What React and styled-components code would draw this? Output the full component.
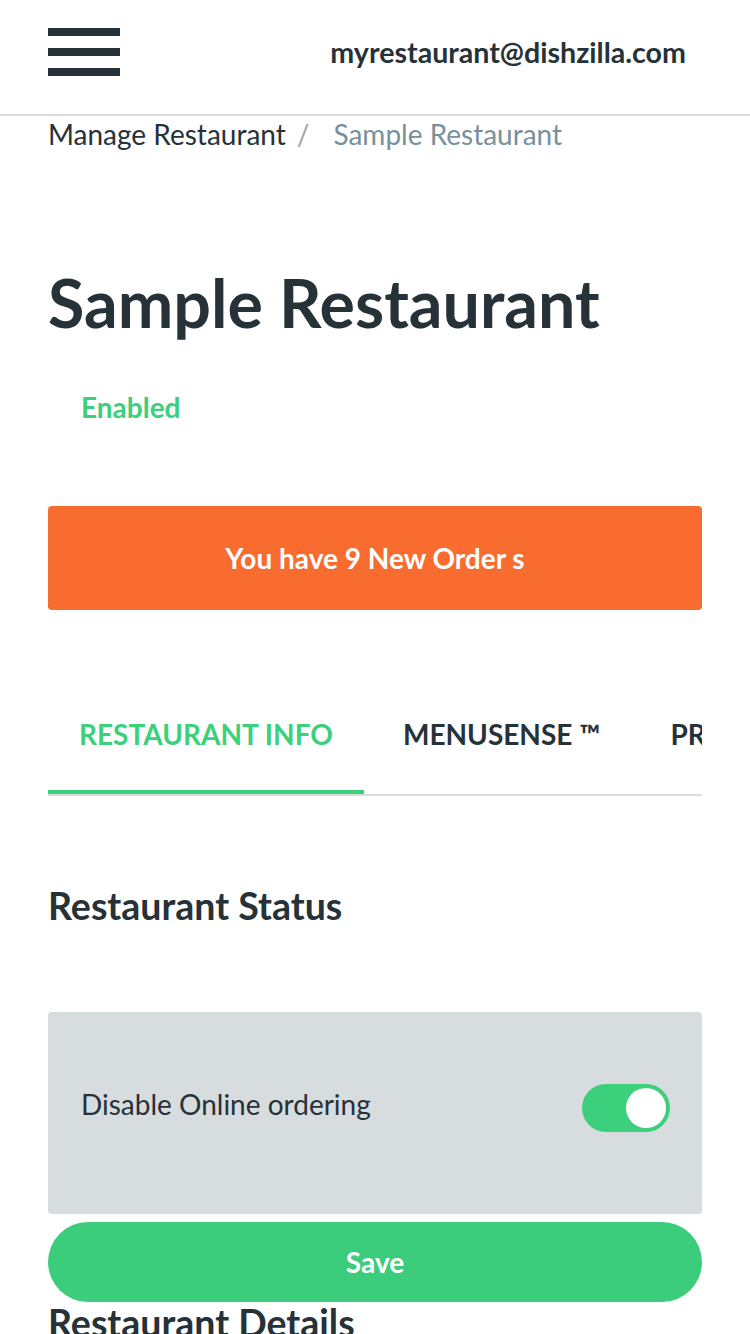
import React from "react";
import styled, { createGlobalStyle } from "styled-components";

const Global = createGlobalStyle`
  html, body { margin: 0; padding: 0; background: #fff; }
  body { font-family: Lato, "Open Sans", sans-serif; color: #263238; overflow: hidden; }
  * { box-sizing: border-box; }
`;

const Page = styled.div`
  width: 750px;
  height: 1334px;
  overflow: hidden;
`;

const Header = styled.header`
  height: 116px;
  border-bottom: 2px solid #dcdcdc;
  display: flex;
  align-items: flex-start;
  justify-content: space-between;
  padding: 0 64px 0 48px;
`;

const Burger = styled.button`
  margin-top: 28px;
  width: 72px;
  height: 48px;
  border: 0;
  padding: 0;
  background: transparent;
  display: flex;
  flex-direction: column;
  justify-content: space-between;
  span {
    display: block;
    height: 8px;
    background: #263238;
  }
`;

const Email = styled.div`
  margin-top: 35px;
  font-size: 28.6px;
  line-height: 34px;
  font-weight: 700;
  color: #263238;
`;

const Content = styled.main`
  padding: 0 48px;
`;

const Crumbs = styled.nav`
  display: flex;
  align-items: center;
  height: 36px;
  font-size: 28px;
  line-height: 36px;
`;

const Crumb = styled.span`
  color: ${(p) => (p.$current ? "#78909c" : "#263238")};
`;

const Sep = styled.span`
  color: #9aa5ab;
  padding: 0 24px 0 11px;
`;

const Title = styled.h1`
  margin: 110px 0 0;
  font-size: 66.4px;
  line-height: 80px;
  font-weight: 700;
  color: #263238;
`;

const Status = styled.div`
  margin-top: 48px;
  padding-left: 33px;
  font-size: 28px;
  font-weight: 700;
  color: #3ccf7c;
  line-height: 34px;
`;

const OrdersBanner = styled.button`
  display: block;
  width: 100%;
  height: 104px;
  margin-top: 82px;
  border: 0;
  border-radius: 4px;
  background: #f86d2f;
  color: #fff;
  font-family: inherit;
  font-size: 28px;
  font-weight: 700;
`;

const Tabs = styled.div`
  margin-top: 65px;
  display: flex;
  gap: 8px;
  overflow: hidden;
  white-space: nowrap;
  border-bottom: 2px solid #dcdcdc;
`;

const Tab = styled.div`
  flex: none;
  height: 119px;
  padding: 42px 31px 0;
  font-size: 28px;
  line-height: 34px;
  font-weight: 700;
  color: ${(p) => (p.$active ? "#3ccf7c" : "#263238")};
  border-bottom: 4px solid ${(p) => (p.$active ? "#3ccf7c" : "transparent")};
`;

const SectionTitle = styled.h2`
  margin: ${(p) => p.$mt || 0}px 0 0;
  font-size: 37.5px;
  line-height: 44px;
  font-weight: 700;
  color: #263238;
`;

const Card = styled.div`
  margin-top: 84px;
  height: 202px;
  border-radius: 4px;
  background: #d7dcdf;
  display: flex;
  align-items: center;
  justify-content: space-between;
  padding: 0 32px 10px 33px;
`;

const CardLabel = styled.span`
  margin-bottom: 8px;
  font-size: 28px;
  line-height: 34px;
  color: #263238;
`;

const Toggle = styled.div`
  width: 88px;
  height: 48px;
  border-radius: 24px;
  background: #3ccf7c;
  display: flex;
  align-items: center;
  justify-content: flex-end;
  padding: 0 4px;
  &::after {
    content: "";
    width: 40px;
    height: 40px;
    border-radius: 50%;
    background: #fff;
  }
`;

const SaveButton = styled.button`
  display: block;
  width: 100%;
  height: 80px;
  margin-top: 8px;
  border: 0;
  border-radius: 40px;
  background: #3bcd7c;
  color: #fff;
  font-family: inherit;
  font-size: 28px;
  font-weight: 700;
`;

export default function App() {
  return (
    <Page>
      <Global />
      <Header>
        <Burger aria-label="menu">
          <span />
          <span />
          <span />
        </Burger>
        <Email>myrestaurant@dishzilla.com</Email>
      </Header>
      <Content>
        <Crumbs>
          <Crumb>Manage Restaurant</Crumb>
          <Sep>/</Sep>
          <Crumb $current>Sample Restaurant</Crumb>
        </Crumbs>
        <Title>Sample Restaurant</Title>
        <Status>Enabled</Status>
        <OrdersBanner>You have 9 New Order s</OrdersBanner>
        <Tabs>
          <Tab $active>RESTAURANT INFO</Tab>
          <Tab>MENUSENSE ™</Tab>
          <Tab>PROMOTIONS</Tab>
        </Tabs>
        <SectionTitle $mt={88}>Restaurant Status</SectionTitle>
        <Card>
          <CardLabel>Disable Online ordering</CardLabel>
          <Toggle />
        </Card>
        <SaveButton>Save</SaveButton>
        <SectionTitle $mt={-1}>Restaurant Details</SectionTitle>
      </Content>
    </Page>
  );
}
